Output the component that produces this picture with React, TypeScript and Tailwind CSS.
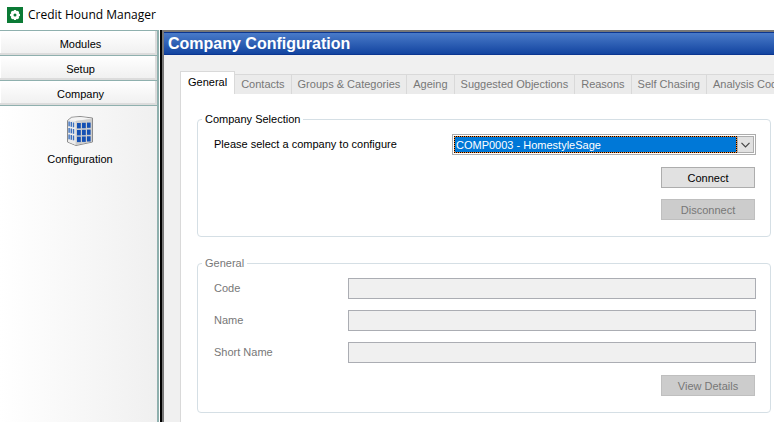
import React from "react";

const modules = ["Modules", "Setup", "Company"];

const tabs = [
  "General",
  "Contacts",
  "Groups & Categories",
  "Ageing",
  "Suggested Objections",
  "Reasons",
  "Self Chasing",
  "Analysis Codes",
];

const fields = [
  { id: "code", label: "Code" },
  { id: "name", label: "Name" },
  { id: "short-name", label: "Short Name" },
];

function AppIcon() {
  return (
    <svg viewBox="0 0 16 16" className="h-4 w-4 shrink-0">
      <rect width="16" height="16" fill="#0b7a35" />
      <g fill="#fff">
        <circle cx="8" cy="8" r="4.2" />
        {[0, 45, 90, 135].map((a) => (
          <rect key={a} x="6.8" y="3" width="2.4" height="10" rx="0.6" transform={`rotate(${a} 8 8)`} />
        ))}
      </g>
      <circle cx="8" cy="8" r="1.5" fill="#0b7a35" />
    </svg>
  );
}

function BuildingIcon() {
  return (
    <svg viewBox="0 0 26 30" className="h-[30px] w-[26px]">
      <path d="M0.5 4.5 L4.5 1.3 L13 0.5 L25.5 2 V26 L9 29.5 L0.5 26 Z" fill="#dadada" stroke="#8c8c8c" />
      <path d="M1 4.5 L5 1.8 L13 1 L25 2.5 L8.5 5 Z" fill="#f4f4f4" />
      <path d="M8.5 5 L25 3 V25.7 L8.5 29 Z" fill="#cdcdcd" />
      <path d="M1 5 L8.5 5.5 V29 L1 25.8 Z" fill="#ececec" />
      <g fill="#1450b4">
        {[7, 14, 20.7].map((y) => (
          <g key={y}>
            <rect x="10" y={y} width="3.8" height="5.4" />
            <rect x="15" y={y - 0.2} width="3.8" height="5.4" />
            <rect x="20" y={y - 0.4} width="3.6" height="5.2" />
          </g>
        ))}
      </g>
      <g fill="#3b6fbd">
        {[5.5, 12, 18.5].map((y) => (
          <g key={y}>
            <rect x="1.4" y={y} width="1.4" height="4.8" />
            <rect x="3.6" y={y + 0.5} width="1.4" height="4.8" />
            <rect x="5.8" y={y + 1} width="1.4" height="4.8" />
          </g>
        ))}
      </g>
    </svg>
  );
}

function Group({ title, children }: { title: string; children: React.ReactNode }) {
  return (
    <fieldset className="min-w-0 rounded-[4px] border border-[#d5dfe5] pt-2 pr-[14px] pb-4 pl-4">
      <legend className="-ml-3 px-[3px] leading-[14px]">{title}</legend>
      {children}
    </fieldset>
  );
}

function Button({ children, disabled }: { children: React.ReactNode; disabled?: boolean }) {
  return (
    <button
      type="button"
      disabled={disabled}
      className="mr-px h-[21px] w-[94px] border border-[#adadad] bg-[#e1e1e1] text-center leading-[21px] disabled:border-[#bfbfbf] disabled:bg-[#cccccc] disabled:text-[#777777]"
    >
      {children}
    </button>
  );
}

export default function App() {
  return (
    <div className="flex min-h-screen flex-col overflow-hidden bg-white font-['Liberation_Sans',Arial,sans-serif] text-[11px] text-black">
      <header className="flex h-[30px] items-center gap-[5px] px-[7px]">
        <AppIcon />
        <h1 className="font-['Open_Sans','Noto_Sans',sans-serif] text-[12px]">Credit Hound Manager</h1>
      </header>

      <div className="flex flex-1">
        <aside className="flex w-[159px] shrink-0 flex-col border-t border-r-2 border-[#8fb0ae] bg-gradient-to-r from-white to-[#f0f0f0]">
          <nav>
            {modules.map((name) => (
              <button
                key={name}
                type="button"
                className="block h-[25px] w-full border-b border-[#8fb0ae] bg-gradient-to-b from-white to-[#efefef] pt-[2px] pl-1 text-center shadow-[inset_-2px_-2px_0_#dcdcdc,inset_1px_1px_0_#ffffff]"
              >
                {name}
              </button>
            ))}
          </nav>
          <a href="#configuration" className="flex flex-col items-center gap-[6px] pt-[10px] pl-[3px]">
            <BuildingIcon />
            <span className="leading-[14px]">Configuration</span>
          </a>
        </aside>

        <div className="ml-px w-[4px] shrink-0 border-r-2 border-l-2 border-r-[#777777] border-l-black" />

        <main className="flex min-w-0 flex-1 flex-col border-t-2 border-[#777777] bg-[#f0f0f0]">
          <h2 className="h-[23px] border-y border-[#0b3590] bg-gradient-to-b from-[#4a7bc9] to-[#1244a0] px-1 text-[16px] leading-[22px] font-bold text-white">
            Company Configuration
          </h2>

          <section className="flex flex-1 flex-col pt-4 pl-4">
            <div role="tablist" className="flex items-end overflow-hidden whitespace-nowrap">
              {tabs.map((tab, i) => (
                <button
                  key={tab}
                  type="button"
                  role="tab"
                  aria-selected={i === 0}
                  className={
                    i === 0
                      ? "h-[23px] shrink-0 border-t border-r border-l border-[#d9d9d9] bg-white px-[7px] pb-[2px]"
                      : "h-[20px] shrink-0 border-t border-r border-[#d9d9d9] bg-[#ebebeb] px-[6px] text-[#777777]"
                  }
                >
                  {tab}
                </button>
              ))}
            </div>

            <div className="flex flex-1 flex-col gap-[19px] border-l border-[#d9d9d9] bg-white pt-[18px] pr-[3px] pl-4">
              <Group title="Company Selection">
                <div className="flex items-center">
                  <label htmlFor="company" className="w-[238px] shrink-0">
                    Please select a company to configure
                  </label>
                  <div className="flex h-[21px] min-w-0 flex-1 border border-[#adadad] p-px">
                    <span className="flex min-w-0 flex-1 bg-[#ff8728]">
                      <select
                        id="company"
                        className="min-w-0 flex-1 appearance-none border border-dotted border-black bg-[#0078d7] bg-clip-padding px-px text-white outline-none"
                      >
                        <option>COMP0003 - HomestyleSage</option>
                      </select>
                    </span>
                    <span className="flex w-[17px] items-center justify-center border border-[#adadad] bg-[#e1e1e1]">
                      <svg viewBox="0 0 9 6" className="h-[6px] w-[9px]" fill="none" stroke="#444">
                        <path d="M0.5 0.8 L4.5 4.8 L8.5 0.8" strokeWidth="1.2" />
                      </svg>
                    </span>
                  </div>
                </div>
                <div className="mt-3 flex flex-col items-end gap-[11px]">
                  <Button>Connect</Button>
                  <Button disabled>Disconnect</Button>
                </div>
              </Group>

              <div className="text-[#777777]">
                <Group title="General">
                  <div className="flex flex-col gap-[11px]">
                    {fields.map((field) => (
                      <div key={field.id} className="flex items-center">
                        <label htmlFor={field.id} className="w-[134px] shrink-0">
                          {field.label}
                        </label>
                        <input
                          id={field.id}
                          type="text"
                          disabled
                          className="h-[21px] min-w-0 flex-1 border border-[#abadb3] bg-[#f0f0f0] px-1"
                        />
                      </div>
                    ))}
                  </div>
                  <div className="mt-3 flex justify-end">
                    <Button disabled>View Details</Button>
                  </div>
                </Group>
              </div>
            </div>
          </section>
        </main>
      </div>
    </div>
  );
}
